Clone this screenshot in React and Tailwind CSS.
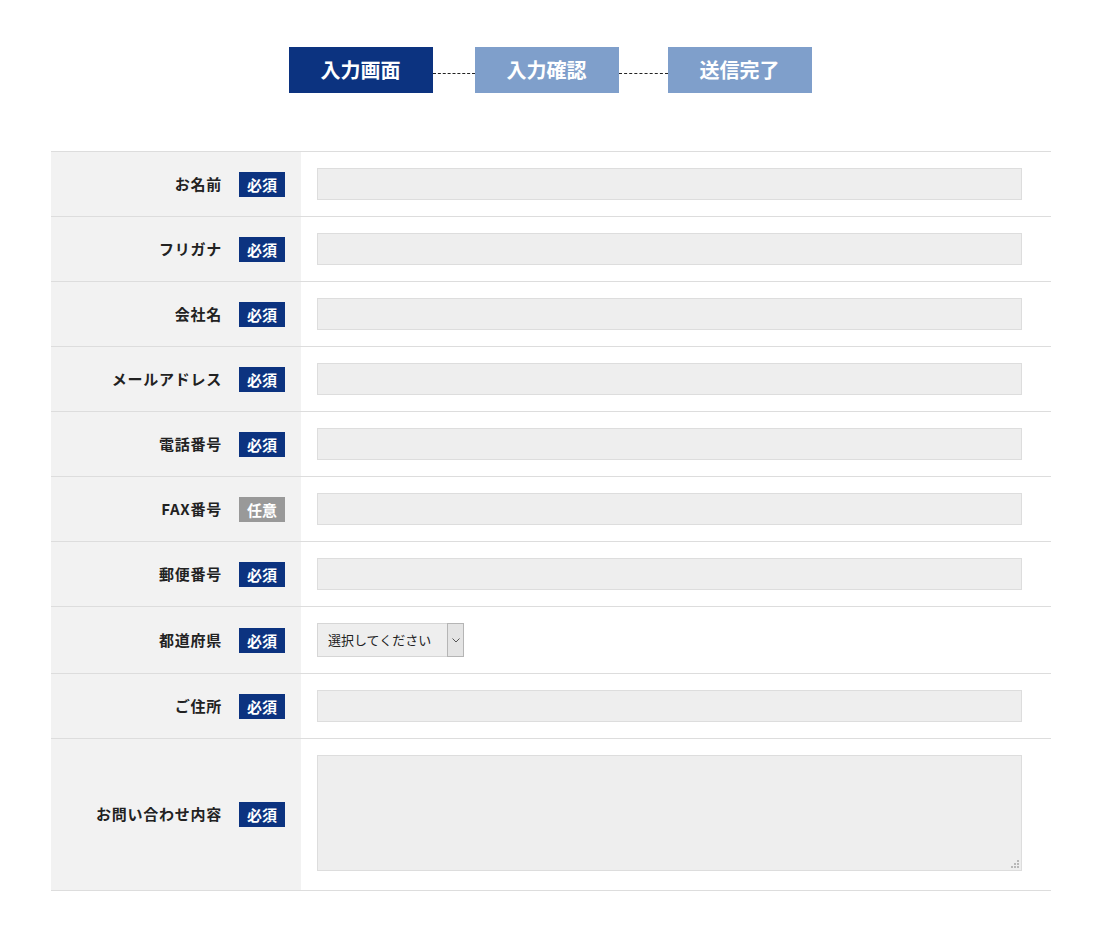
import React from 'react';

const fields = [
  { label: 'お名前', required: true, type: 'text' },
  { label: 'フリガナ', required: true, type: 'text' },
  { label: '会社名', required: true, type: 'text' },
  { label: 'メールアドレス', required: true, type: 'text' },
  { label: '電話番号', required: true, type: 'text' },
  { label: 'FAX番号', required: false, type: 'text' },
  { label: '郵便番号', required: true, type: 'text' },
  { label: '都道府県', required: true, type: 'select' },
  { label: 'ご住所', required: true, type: 'text' },
  { label: 'お問い合わせ内容', required: true, type: 'textarea' },
];

const Badge = ({ required }) =>
  required ? (
    <span className="inline-flex items-center justify-center w-[46px] h-[25px] bg-[#0c3380] text-white text-[15px] font-bold leading-none">
      必須
    </span>
  ) : (
    <span className="inline-flex items-center justify-center w-[46px] h-[25px] bg-[#999999] text-white text-[15px] font-bold leading-none">
      任意
    </span>
  );

const Field = ({ type }) => {
  if (type === 'select') {
    return (
      <div className="relative w-[147px] h-[34px]">
        <select className="appearance-none w-full h-full bg-[#eeeeee] border border-[#d6d6d6] pl-[10px] text-[13px] text-[#222] outline-none">
          <option>選択してください</option>
        </select>
        <div className="absolute right-0 top-0 w-[17px] h-full border border-[#b5b5b5] bg-[#e4e4e4] flex items-center justify-center pointer-events-none">
          <svg width="8" height="5" viewBox="0 0 8 5" fill="none">
            <path d="M0.5 0.5 L4 4 L7.5 0.5" stroke="#555" strokeWidth="1" />
          </svg>
        </div>
      </div>
    );
  }
  if (type === 'textarea') {
    return (
      <div className="relative">
        <textarea className="block w-full h-[116px] bg-[#eeeeee] border border-[#dddddd] outline-none resize-none" />
        {/* resize grip */}
        <svg className="absolute right-[3px] bottom-[3px]" width="8" height="8" viewBox="0 0 8 8">
          <rect x="6" y="0" width="2" height="2" fill="#b8b8b8" />
          <rect x="3" y="3" width="2" height="2" fill="#b8b8b8" />
          <rect x="6" y="3" width="2" height="2" fill="#b8b8b8" />
          <rect x="0" y="6" width="2" height="2" fill="#b8b8b8" />
          <rect x="3" y="6" width="2" height="2" fill="#b8b8b8" />
          <rect x="6" y="6" width="2" height="2" fill="#b8b8b8" />
        </svg>
      </div>
    );
  }
  return <input type="text" className="block w-full h-[32px] bg-[#eeeeee] border border-[#dddddd] outline-none" />;
};

const Step = ({ label, active }) => (
  <div
    className={
      'w-[144px] h-[46px] flex items-center justify-center text-white text-[20px] font-bold ' +
      (active ? 'bg-[#0c3380]' : 'bg-[#7f9fcb]')
    }
  >
    {label}
  </div>
);

export default function App() {
  return (
    <div
      className="min-h-screen bg-white pt-[47px] pb-10 text-[#222]"
      style={{ fontFamily: '"Noto Sans CJK JP", "Noto Sans", sans-serif' }}
    >
      <div className="flex items-center justify-center">
        <Step label="入力画面" active />
        <div className="w-[42px] mt-[6px] border-t border-dashed border-[#222]" />
        <Step label="入力確認" />
        <div className="w-[49px] mt-[6px] border-t border-dashed border-[#222]" />
        <Step label="送信完了" />
      </div>

      <div className="ml-[51px] w-[1000px] mt-[58px] border-t border-[#dddddd]">
        {fields.map((f) => (
          <div key={f.label} className="flex border-b border-[#dddddd]">
            <div className="w-[250px] shrink-0 bg-[#f2f2f2] flex items-center justify-end pr-[16px] gap-[17px]">
              <span className="text-[15px] font-bold tracking-[0.05em]">{f.label}</span>
              <Badge required={f.required} />
            </div>
            <div
              className={
                'flex-1 pl-[16px] pr-[29px] pt-[16px] ' +
                (f.type === 'textarea' ? 'pb-[19px]' : 'pb-[16px]')
              }
            >
              <Field type={f.type} />
            </div>
          </div>
        ))}
      </div>
    </div>
  );
}
